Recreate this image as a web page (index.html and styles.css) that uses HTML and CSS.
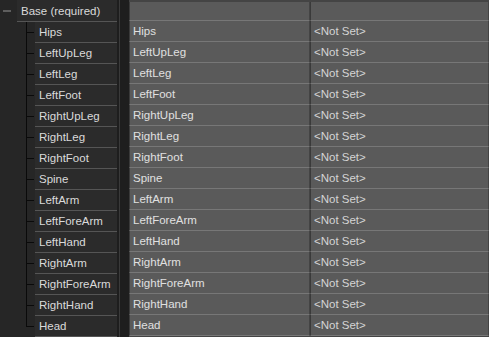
FILE: index.html
```html
<!DOCTYPE html>
<html>
<head>
<meta charset="utf-8">
<link rel="stylesheet" href="styles.css">
</head>
<body>
<div class="app">
  <div class="tree">
    <div class="root">
      <span class="minus"></span>
      <div class="root-label">Base (required)</div>
    </div>
    <div class="children">
      <div class="node"><span class="branch"></span><div class="label">Hips</div></div>
      <div class="node"><span class="branch"></span><div class="label">LeftUpLeg</div></div>
      <div class="node"><span class="branch"></span><div class="label">LeftLeg</div></div>
      <div class="node"><span class="branch"></span><div class="label">LeftFoot</div></div>
      <div class="node"><span class="branch"></span><div class="label">RightUpLeg</div></div>
      <div class="node"><span class="branch"></span><div class="label">RightLeg</div></div>
      <div class="node"><span class="branch"></span><div class="label">RightFoot</div></div>
      <div class="node"><span class="branch"></span><div class="label">Spine</div></div>
      <div class="node"><span class="branch"></span><div class="label">LeftArm</div></div>
      <div class="node"><span class="branch"></span><div class="label">LeftForeArm</div></div>
      <div class="node"><span class="branch"></span><div class="label">LeftHand</div></div>
      <div class="node"><span class="branch"></span><div class="label">RightArm</div></div>
      <div class="node"><span class="branch"></span><div class="label">RightForeArm</div></div>
      <div class="node"><span class="branch"></span><div class="label">RightHand</div></div>
      <div class="node last"><span class="branch"></span><div class="label">Head</div></div>
    </div>
  </div>
  <div class="divider"><span class="divider-line"></span></div>
  <div class="grid">
    <div class="cell head"></div><div class="cell head"></div>
    <div class="cell">Hips</div><div class="cell val">&lt;Not Set&gt;</div>
    <div class="cell">LeftUpLeg</div><div class="cell val">&lt;Not Set&gt;</div>
    <div class="cell">LeftLeg</div><div class="cell val">&lt;Not Set&gt;</div>
    <div class="cell">LeftFoot</div><div class="cell val">&lt;Not Set&gt;</div>
    <div class="cell">RightUpLeg</div><div class="cell val">&lt;Not Set&gt;</div>
    <div class="cell">RightLeg</div><div class="cell val">&lt;Not Set&gt;</div>
    <div class="cell">RightFoot</div><div class="cell val">&lt;Not Set&gt;</div>
    <div class="cell">Spine</div><div class="cell val">&lt;Not Set&gt;</div>
    <div class="cell">LeftArm</div><div class="cell val">&lt;Not Set&gt;</div>
    <div class="cell">LeftForeArm</div><div class="cell val">&lt;Not Set&gt;</div>
    <div class="cell">LeftHand</div><div class="cell val">&lt;Not Set&gt;</div>
    <div class="cell">RightArm</div><div class="cell val">&lt;Not Set&gt;</div>
    <div class="cell">RightForeArm</div><div class="cell val">&lt;Not Set&gt;</div>
    <div class="cell">RightHand</div><div class="cell val">&lt;Not Set&gt;</div>
    <div class="cell">Head</div><div class="cell val">&lt;Not Set&gt;</div>
  </div>
</div>
</body>
</html>
```
FILE: styles.css
```css
html, body {
  margin: 0;
  padding: 0;
  background: #262626;
  overflow: hidden;
}
.app {
  display: flex;
  width: 489px;
  height: 337px;
  font-family: "Liberation Sans", Arial, sans-serif;
  font-size: 11.5px;
}
.tree {
  width: 117px;
  flex: none;
  color: #dadada;
}
.root {
  display: flex;
  align-items: center;
  height: 21px;
  border-bottom: 1px solid #555555;
  margin-left: 17px;
  background: #2b2b2b;
  position: relative;
}
.minus {
  position: absolute;
  left: -14px;
  top: 10px;
  width: 8px;
  height: 2px;
  background: #5e5e5e;
}
.root-label {
  padding-left: 4px;
  white-space: nowrap;
}
.children {
  margin-left: 26px;
}
.node {
  display: flex;
  height: 21px;
}
.branch {
  flex: none;
  width: 9px;
  height: 21px;
  background:
    linear-gradient(#0a0a0a, #0a0a0a) 0 0 / 1px 21px no-repeat,
    linear-gradient(#0a0a0a, #0a0a0a) 0 10px / 8px 1px no-repeat;
}
.node.last .branch {
  background:
    linear-gradient(#0a0a0a, #0a0a0a) 0 0 / 1px 11px no-repeat,
    linear-gradient(#0a0a0a, #0a0a0a) 0 10px / 8px 1px no-repeat;
}
.label {
  flex: 1;
  height: 20px;
  line-height: 21px;
  padding-left: 4px;
  border-bottom: 1px solid #555555;
  background: #2b2b2b;
  white-space: nowrap;
}
.divider {
  width: 12px;
  flex: none;
  display: flex;
  background: #1e1e1e;
}
.divider-line {
  width: 1px;
  margin-left: 2px;
  background: #3a3a3a;
}
.grid {
  flex: 1;
  display: grid;
  grid-template-columns: 181px 1fr;
  grid-auto-rows: 21px;
  align-content: start;
  background: #444444;
}
.cell {
  height: 20px;
  line-height: 21px;
  padding-left: 3px;
  background: #5a5a5a;
  border-bottom: 1px solid #777777;
  border-right: 1px solid #444444;
  border-left: 1px solid #3a3a3a;
  color: #e0e0e0;
  white-space: nowrap;
  overflow: hidden;
}
.cell.val {
  color: #d4d4d4;
}
.cell.head {
  height: 18px;
  margin-top: 2px;
}
```
